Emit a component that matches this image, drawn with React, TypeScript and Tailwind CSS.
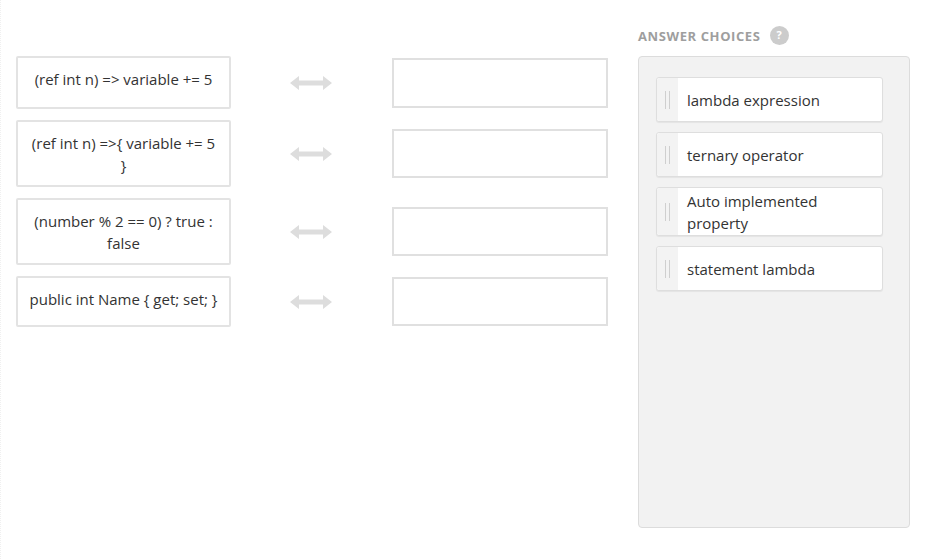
import React from "react";

const pairs = [
  { text: "(ref int n) => variable += 5", box: "h-[53px] pb-[7px]", target: "h-[50px]" },
  { text: "(ref int n) =>{ variable += 5\n}", box: "h-[67px]", target: "h-[49px]" },
  { text: "(number % 2 == 0) ? true :\nfalse", box: "h-[67px]", target: "h-[49px]" },
  { text: "public int Name { get; set; }", box: "h-[51px] pb-[5px]", target: "h-[49px]" },
];

const choices = ["lambda expression", "ternary operator", "Auto implemented property", "statement lambda"];

const Arrow = () => (
  <svg width="42" height="14" viewBox="0 0 42 14" className="block">
    <polygon
      points="0,7 9,0 9,4.5 33,4.5 33,0 42,7 33,14 33,9.5 9,9.5 9,14"
      fill="#dddddd"
    />
  </svg>
);

export default function App() {
  return (
    <div className="flex min-h-[559px] w-[939px] bg-white border-l border-dotted border-[#f0f0f0] font-['Open_Sans',sans-serif] text-[#333]">
      {/* matching rows */}
      <div className="flex flex-col gap-[11px] pl-[15px] pt-[56px]">
        {pairs.map((p) => (
          <div key={p.text} className="flex items-center">
            <div
              className={`flex w-[215px] items-center justify-center whitespace-pre-line rounded-[2px] border-2 border-[#e3e3e3] px-1 text-center text-[15px] leading-[22px] ${p.box}`}
            >
              {p.text}
            </div>
            <div className="ml-[59px]">
              <Arrow />
            </div>
            <div className={`ml-[60px] w-[216px] border-2 border-[#e0e0e0] ${p.target}`} />
          </div>
        ))}
      </div>

      {/* answer choices */}
      <div className="ml-[30px] pt-[26px]">
        <div className="flex h-[19px] items-center gap-[9px]">
          <span className="text-[13px] font-bold leading-4 tracking-[0.6px] text-[#9e9e9e]">
            ANSWER CHOICES
          </span>
          <span className="flex h-[19px] w-[19px] items-center justify-center rounded-full bg-[#cccccc] text-[11px] font-bold text-white">
            ?
          </span>
        </div>
        <div className="mt-[11px] flex h-[472px] w-[272px] flex-col gap-[10px] rounded-[4px] border border-[#dcdcdc] bg-[#f2f2f2] pl-[17px] pt-[20px]">
          {choices.map((c) => (
            <div
              key={c}
              className="flex min-h-[45px] w-[227px] rounded-[3px] border border-[#dedede] bg-white shadow-[0_1px_1px_rgba(0,0,0,0.06)]"
            >
              <div className="flex w-[21px] shrink-0 items-center justify-center gap-[3px] rounded-l-[3px] bg-[#f3f3f3]">
                <span className="h-[18px] w-px bg-[#cfcfcf]" />
                <span className="h-[18px] w-px bg-[#cfcfcf]" />
              </div>
              <div className="flex flex-1 items-center py-[1.5px] pl-[9px] pr-3 text-[15px] leading-[22px]">
                {c}
              </div>
            </div>
          ))}
        </div>
      </div>
    </div>
  );
}
